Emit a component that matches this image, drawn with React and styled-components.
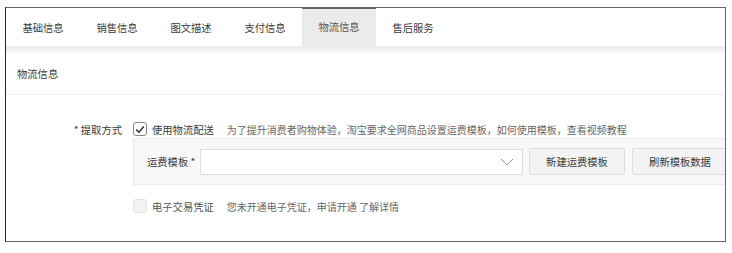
import React from 'react';
import styled, { createGlobalStyle } from 'styled-components';

const GlobalStyle = createGlobalStyle`
  body {
    margin: 0;
    background: #fff;
    font-family: "Noto Sans CJK SC", "Noto Sans", sans-serif;
    font-size: 10.3px;
    color: #3a3a3a;
  }
`;

const Page = styled.div`
  padding: 7px 6px 0 5px;
`;

const Panel = styled.div`
  width: 719px;
  height: 233px;
  border: 1px solid #666;
  border-left-color: #222;
  overflow: hidden;
  display: flex;
  flex-direction: column;
`;

const TabBar = styled.div`
  display: flex;
  height: 38px;
`;

const Tab = styled.div`
  width: ${p => p.$w}px;
  display: flex;
  align-items: center;
  justify-content: center;
  color: ${p => (p.$active ? '#555' : '#3a3a3a')};
  background: ${p => (p.$active ? '#ebebeb' : '#fff')};
  box-shadow: ${p => (p.$active ? 'inset 0 2px 0 #666' : 'none')};
  margin-top: ${p => (p.$active ? '-1px' : '0')};
  height: ${p => (p.$active ? '39px' : '38px')};
`;

const Band = styled.div`
  height: 7px;
  background: linear-gradient(#ececec, #f5f5f5);
`;

const SectionHead = styled.div`
  height: 41px;
  display: flex;
  align-items: center;
  padding-left: 11px;
  border-bottom: 1px solid #eee;
`;

const Form = styled.div`
  padding-top: 25px;
  display: flex;
  flex-direction: column;
`;

const Row = styled.div`
  display: flex;
  align-items: center;
  height: 18px;
  margin-top: ${p => p.$mt || 0}px;
`;

const Label = styled.div`
  width: 116px;
  text-align: right;
  margin-right: 11px;
`;

const Check = styled.span`
  width: 12px;
  height: 12px;
  border: 1px solid ${p => (p.$disabled ? '#e2e2e2' : '#888')};
  background: ${p => (p.$disabled ? '#f3f3f3' : '#fff')};
  border-radius: 3px;
  display: flex;
  align-items: center;
  justify-content: center;
  margin-right: 5px;
`;

const CheckText = styled.span`
  color: ${p => (p.$disabled ? '#555' : '#3a3a3a')};
  margin-right: 13px;
`;

const Hint = styled.span`
  color: #666;
  font-size: 10px;
  white-space: nowrap;
`;

const Sub = styled.div`
  margin-left: 127px;
  height: 45px;
  border: 1px solid #ececec;
  border-right: none;
  background: #f8f8f8;
  display: flex;
  align-items: center;
  padding-left: 13px;
  white-space: nowrap;
`;

const SubLabel = styled.span`
  width: 53px;
  flex-shrink: 0;
`;

const Select = styled.div`
  flex-shrink: 0;
  width: 313px;
  height: 24px;
  border: 1px solid #ddd;
  background: #fff;
  display: flex;
  align-items: center;
  justify-content: flex-end;
  padding-right: 8px;
`;

const Button = styled.button`
  flex-shrink: 0;
  width: 96px;
  height: 27px;
  margin-left: ${p => p.$ml}px;
  border: 1px solid #ddd;
  border-radius: 2px;
  background: #f3f3f3;
  color: #3a3a3a;
  font-family: inherit;
  font-size: 10.3px;
  padding: 0;
`;

const tabs = [
  ['基础信息', 74],
  ['销售信息', 74],
  ['图文描述', 74],
  ['支付信息', 74],
  ['物流信息', 74],
  ['售后服务', 74],
];

export default function App() {
  return (
    <Page>
      <GlobalStyle />
      <Panel>
        <TabBar>
          {tabs.map(([t, w]) => (
            <Tab key={t} $w={w} $active={t === '物流信息'}>{t}</Tab>
          ))}
        </TabBar>
        <Band />
        <SectionHead>物流信息</SectionHead>
        <Form>
          <Row>
            <Label>* 提取方式</Label>
            <Check>
              <svg width="10" height="9" viewBox="0 0 10 9">
                <path d="M1.2 4.6 L4 7.2 L8.8 1.4" fill="none" stroke="#333" strokeWidth="1.5" />
              </svg>
            </Check>
            <CheckText>使用物流配送</CheckText>
            <Hint>为了提升消费者购物体验，淘宝要求全网商品设置运费模板，如何使用模板，查看视频教程</Hint>
          </Row>
          <Sub>
            <SubLabel>运费模板 *</SubLabel>
            <Select>
              <svg width="14" height="8" viewBox="0 0 14 8">
                <path d="M1 1 L7 7 L13 1" fill="none" stroke="#999" strokeWidth="1" />
              </svg>
            </Select>
            <Button $ml={6}>新建运费模板</Button>
            <Button $ml={7}>刷新模板数据</Button>
          </Sub>
          <Row $mt={12}>
            <Label />
            <Check $disabled />
            <CheckText $disabled>电子交易凭证</CheckText>
            <Hint>您未开通电子凭证，申请开通 了解详情</Hint>
          </Row>
        </Form>
      </Panel>
    </Page>
  );
}
